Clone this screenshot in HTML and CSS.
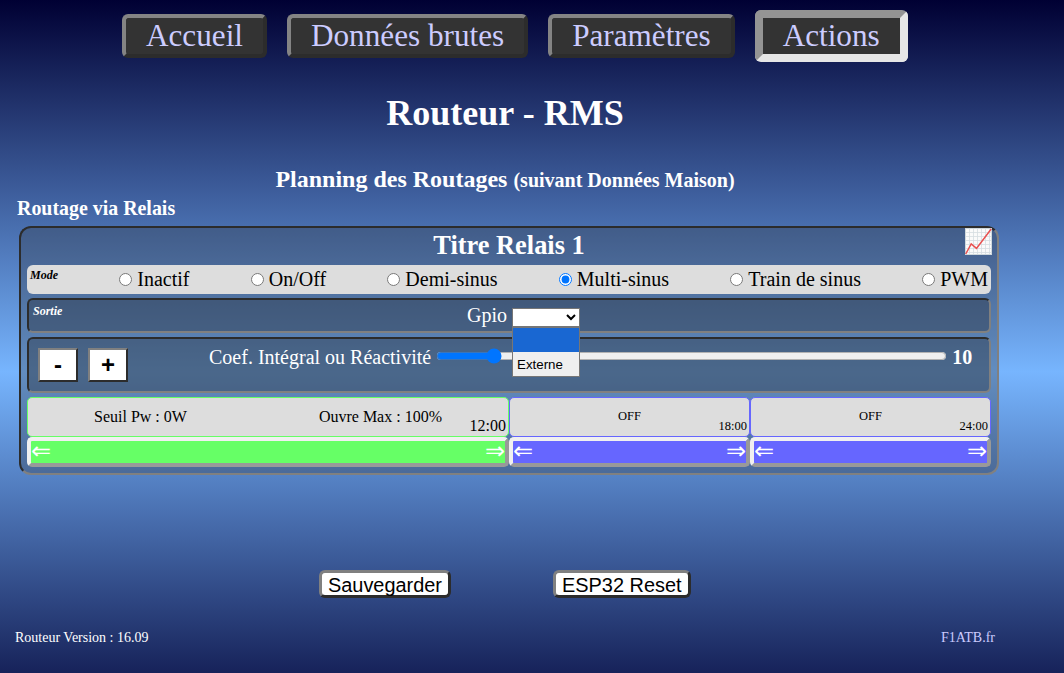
FILE: index.html
```html
<!DOCTYPE html>
<html lang="fr">
<head>
  <meta charset="UTF-8">
  <title>Routeur - RMS</title>
  <link rel="stylesheet" href="styles.css">
</head>
<body>
  <nav class="onglets">
    <a class="onglet">Accueil</a>
    <a class="onglet">Données brutes</a>
    <a class="onglet">Paramètres</a>
    <a class="onglet actif">Actions</a>
  </nav>

  <main class="page">
    <h1>Routeur - RMS</h1>
    <h2>Planning des Routages <small>(suivant Données Maison)</small></h2>
    <h4>Routage via Relais</h4>

    <section class="planning">
      <div class="titre">
        <span>Titre Relais 1</span>
        <svg class="graphe" viewBox="0 0 27 27">
          <rect x="0.5" y="0.5" width="26" height="26" fill="#fafafa" stroke="#cfd8dc"/>
          <path d="M4.5 1v25M8.5 1v25M12.5 1v25M16.5 1v25M20.5 1v25M24.5 1v25M1 4.5h25M1 8.5h25M1 12.5h25M1 16.5h25M1 20.5h25M1 24.5h25" stroke="#d5dde1" stroke-width="0.8"/>
          <path d="M0.7 26L6.2 16L11.5 20.4L26.2 1" fill="none" stroke="#e8504f" stroke-width="1.5"/>
        </svg>
      </div>

      <!-- Mode -->
      <div class="modes">
        <span class="legende">Mode</span>
        <label><input type="radio" name="mode">Inactif</label>
        <label><input type="radio" name="mode">On/Off</label>
        <label><input type="radio" name="mode">Demi-sinus</label>
        <label><input type="radio" name="mode" checked>Multi-sinus</label>
        <label><input type="radio" name="mode">Train de sinus</label>
        <label><input type="radio" name="mode">PWM</label>
      </div>

      <!-- Sortie -->
      <div class="ligne sortie">
        <span class="legende">Sortie</span>
        <div class="gpio">
          <label for="gpio">Gpio</label>
          <div class="choix">
            <select id="gpio"><option></option><option>Externe</option></select>
            <div class="liste">
              <div class="option choisie"></div>
              <div class="option">Externe</div>
            </div>
          </div>
        </div>
      </div>

      <!-- Réactivité -->
      <div class="ligne reglage">
        <button class="bouton_pm">-</button>
        <button class="bouton_pm">+</button>
        <div class="coef">
          <label for="slider">Coef. Intégral ou Réactivité</label>
          <input type="range" id="slider" min="0" max="100" value="10">
          <strong>10</strong>
        </div>
      </div>

      <!-- Périodes -->
      <div class="periodes">
        <div class="periode verte">
          <div class="infos">
            <span>Seuil Pw : 0W</span>
            <span>Ouvre Max : 100%</span>
            <span class="heure">12:00</span>
          </div>
          <div class="curseur"><span>⇐</span><span>⇒</span></div>
        </div>
        <div class="periode">
          <div class="infos">
            <span>OFF</span>
            <span class="heure">18:00</span>
          </div>
          <div class="curseur"><span>⇐</span><span>⇒</span></div>
        </div>
        <div class="periode">
          <div class="infos">
            <span>OFF</span>
            <span class="heure">24:00</span>
          </div>
          <div class="curseur"><span>⇐</span><span>⇒</span></div>
        </div>
      </div>
    </section>

    <div class="boutons">
      <button>Sauvegarder</button>
      <button>ESP32 Reset</button>
    </div>

    <footer class="pied">
      <span>Routeur Version : 16.09</span>
      <a>F1ATB.fr</a>
    </footer>
  </main>
</body>
</html>
```
FILE: styles.css
```css
* {
  box-sizing: border-box;
}
html {
  background: #003;
}
body {
  margin: 0;
  height: 673px;
  overflow: hidden;
  color: white;
  font-family: "Liberation Serif", "Times New Roman", serif;
  font-size: 20px;
  background: linear-gradient(#003, #77b5fe, #003) 0 0 / 100% 744px no-repeat;
}
.onglets {
  display: flex;
  align-items: center;
  gap: 20px;
  padding: 10px 0 0 122px;
}
.onglet {
  height: 44px;
  padding: 0 20px;
  border: 4px solid;
  border-color: #848484 #2c2c2c #2c2c2c #848484;
  border-radius: 6px;
  background: #333;
  color: #ccf;
  font-size: 31.2px;
  line-height: 35px;
}
.onglet.actif {
  height: 52px;
  border-width: 8px;
  border-color: #949494 #e6e6e6 #e6e6e6 #949494;
}
.page {
  width: 980px;
  margin-left: 15px;
}
h1 {
  margin: 30px 0 0;
  font-size: 36px;
  line-height: 42px;
  text-align: center;
}
h2 {
  margin: 31px 0 0;
  font-size: 24px;
  line-height: 28px;
  text-align: center;
}
h2 small {
  font-size: 20px;
}
h4 {
  margin: 3px 0 0 2px;
  font-size: 19.92px;
  line-height: 22px;
}
.planning {
  width: 980px;
  height: 249px;
  margin: 7px 0 0 4px;
  padding: 0 6px;
  border: 2px solid;
  border-color: #2c2c2c #808080 #808080 #2c2c2c;
  border-radius: 12px;
  background: rgba(50, 50, 50, 0.3);
}
.titre {
  display: flex;
  justify-content: center;
  position: relative;
  height: 37px;
  font-size: 26.4px;
  font-weight: bold;
  line-height: 34px;
}
.graphe {
  position: absolute;
  top: 0;
  right: -1px;
  width: 27px;
  height: 27px;
}
.modes {
  display: flex;
  justify-content: space-between;
  height: 29px;
  padding: 0 3px;
  border-radius: 6px;
  background: #ddd;
  color: black;
}
.modes label {
  display: flex;
  align-items: center;
}
.modes input {
  margin: 0 5px 0 0;
}
.legende {
  font-size: 12px;
  font-weight: bold;
  font-style: italic;
  line-height: 20px;
}
.ligne {
  display: flex;
  margin-top: 4px;
  border: 2px solid;
  border-color: #2c2c2c #808080 #808080 #2c2c2c;
  border-radius: 6px;
  background: rgba(40, 48, 60, 0.4);
}
.sortie {
  height: 35px;
  padding-left: 4px;
}
.sortie .legende {
  width: 434px;
  line-height: 22px;
}
.gpio {
  display: flex;
  gap: 5px;
  line-height: 30px;
}
.choix {
  position: relative;
  margin-top: 8px;
}
.choix select {
  display: block;
  width: 68px;
  height: 19px;
  border: 1px solid #767676;
  background: white;
}
/* liste ouverte par-dessus la ligne suivante */
.liste {
  position: absolute;
  z-index: 1;
  top: 19px;
  left: 0;
  width: 68px;
  border: 1px solid #767676;
  background: #efefef;
  color: black;
  font: 13.333px/25px "Liberation Sans", Arial, sans-serif;
}
.option {
  height: 24px;
  padding-left: 4px;
}
.option.choisie {
  background: #1967d2;
}
.reglage {
  gap: 10px;
  height: 56px;
  padding: 9px 0 0 9px;
}
.bouton_pm {
  width: 40px;
  height: 34px;
  padding: 0;
  border: 2px solid;
  border-color: #808080 #2c2c2c #2c2c2c #808080;
  background: white;
  color: black;
  font: bold 24px "Liberation Sans", Arial, sans-serif;
}
.coef {
  display: flex;
  align-items: center;
  height: 18px;
  margin-left: 71px;
}
.coef input {
  width: 511px;
  margin: 0 5px 3px 5px;
}
.periodes {
  display: flex;
  margin-top: 4px;
}
.periode {
  flex: 1;
  --couleur: #66f;
}
.periode.verte {
  flex: 2;
  --couleur: #6f6;
}
.infos {
  display: flex;
  position: relative;
  justify-content: space-around;
  height: 40px;
  border: 1px solid var(--couleur);
  border-radius: 5px;
  background: #ddd;
  color: black;
  font-size: 12.5px;
  line-height: 37px;
}
.verte .infos {
  font-size: 16px;
}
.heure {
  position: absolute;
  right: 2px;
  bottom: 1px;
  line-height: 18px;
}
.curseur {
  display: flex;
  justify-content: space-between;
  height: 30px;
  border: 4px solid;
  border-color: #f0f0f0 #999 #999 #f0f0f0;
  border-radius: 5px;
  background: var(--couleur);
  font-size: 24px;
  line-height: 20px;
}
.boutons {
  display: flex;
  gap: 102px;
  margin: 95px 0 0 304px;
}
.boutons button {
  height: 28px;
  padding: 0 6px;
  border: 3px solid;
  border-color: #808080 #2c2c2c #2c2c2c #808080;
  border-radius: 6px;
  background: white;
  color: black;
  font: 19.92px/24px "Liberation Sans", Arial, sans-serif;
}
.pied {
  display: flex;
  justify-content: space-between;
  margin-top: 32px;
  font-size: 14px;
  line-height: 16px;
}
.pied a {
  color: #ccf;
}
```
